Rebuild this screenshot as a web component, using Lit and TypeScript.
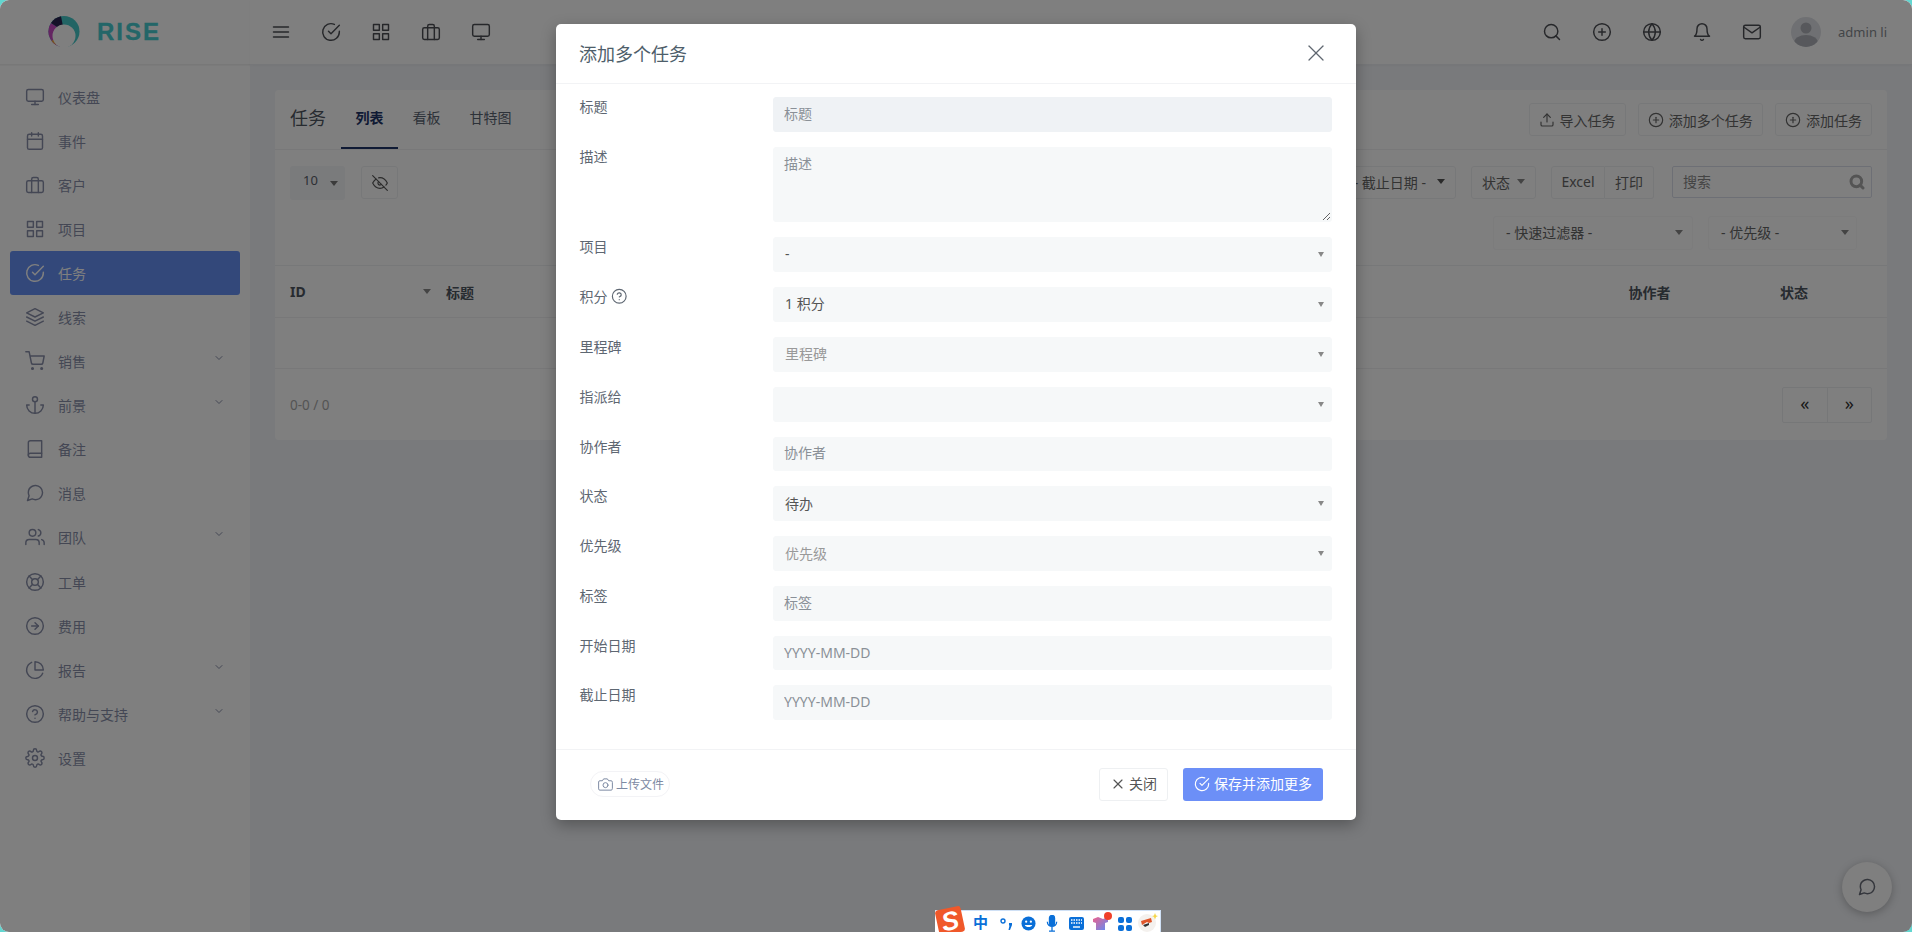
import { LitElement, html, css, svg } from "lit";
import { customElement } from "lit/decorators.js";

const I: Record<string, any> = {
  monitor: svg`<rect x="2" y="3" width="20" height="14" rx="2"/><line x1="8" y1="21" x2="16" y2="21"/><line x1="12" y1="17" x2="12" y2="21"/>`,
  calendar: svg`<rect x="3" y="4" width="18" height="18" rx="2"/><line x1="16" y1="2" x2="16" y2="6"/><line x1="8" y1="2" x2="8" y2="6"/><line x1="3" y1="10" x2="21" y2="10"/>`,
  briefcase: svg`<rect x="2" y="7" width="20" height="14" rx="2"/><path d="M16 21V5a2 2 0 0 0-2-2h-4a2 2 0 0 0-2 2v16"/>`,
  grid: svg`<rect x="3" y="3" width="7" height="7"/><rect x="14" y="3" width="7" height="7"/><rect x="14" y="14" width="7" height="7"/><rect x="3" y="14" width="7" height="7"/>`,
  check: svg`<path d="M22 11.08V12a10 10 0 1 1-5.93-9.14"/><polyline points="22 4 12 14.01 9 11.01"/>`,
  layers: svg`<polygon points="12 2 2 7 12 12 22 7 12 2"/><polyline points="2 17 12 22 22 17"/><polyline points="2 12 12 17 22 12"/>`,
  cart: svg`<circle cx="9" cy="21" r="1"/><circle cx="20" cy="21" r="1"/><path d="M1 1h4l2.68 13.39a2 2 0 0 0 2 1.61h9.72a2 2 0 0 0 2-1.61L23 6H6"/>`,
  anchor: svg`<circle cx="12" cy="5" r="3"/><line x1="12" y1="22" x2="12" y2="8"/><path d="M5 12H2a10 10 0 0 0 20 0h-3"/>`,
  book: svg`<path d="M4 19.5A2.5 2.5 0 0 1 6.5 17H20"/><path d="M6.5 2H20v20H6.5A2.5 2.5 0 0 1 4 19.5v-15A2.5 2.5 0 0 1 6.5 2z"/>`,
  message: svg`<path d="M21 11.5a8.38 8.38 0 0 1-.9 3.8 8.5 8.5 0 0 1-7.6 4.7 8.38 8.38 0 0 1-3.8-.9L3 21l1.9-5.7a8.38 8.38 0 0 1-.9-3.8 8.5 8.5 0 0 1 4.7-7.6 8.38 8.38 0 0 1 3.8-.9h.5a8.48 8.48 0 0 1 8 8v.5z"/>`,
  users: svg`<path d="M17 21v-2a4 4 0 0 0-4-4H5a4 4 0 0 0-4 4v2"/><circle cx="9" cy="7" r="4"/><path d="M23 21v-2a4 4 0 0 0-3-3.87"/><path d="M16 3.13a4 4 0 0 1 0 7.75"/>`,
  buoy: svg`<circle cx="12" cy="12" r="10"/><circle cx="12" cy="12" r="4"/><line x1="4.93" y1="4.93" x2="9.17" y2="9.17"/><line x1="14.83" y1="14.83" x2="19.07" y2="19.07"/><line x1="14.83" y1="9.17" x2="19.07" y2="4.93"/><line x1="4.93" y1="19.07" x2="9.17" y2="14.83"/>`,
  arrow: svg`<circle cx="12" cy="12" r="10"/><polyline points="12 16 16 12 12 8"/><line x1="8" y1="12" x2="16" y2="12"/>`,
  pie: svg`<path d="M21.21 15.89A10 10 0 1 1 8 2.83"/><path d="M22 12A10 10 0 0 0 12 2v10z"/>`,
  help: svg`<circle cx="12" cy="12" r="10"/><path d="M9.09 9a3 3 0 0 1 5.83 1c0 2-3 3-3 3"/><line x1="12" y1="17" x2="12.01" y2="17"/>`,
  settings: svg`<circle cx="12" cy="12" r="3"/><path d="M19.4 15a1.65 1.65 0 0 0 .33 1.82l.06.06a2 2 0 0 1 0 2.83 2 2 0 0 1-2.83 0l-.06-.06a1.65 1.65 0 0 0-1.82-.33 1.65 1.65 0 0 0-1 1.51V21a2 2 0 0 1-2 2 2 2 0 0 1-2-2v-.09A1.65 1.65 0 0 0 9 19.4a1.65 1.65 0 0 0-1.82.33l-.06.06a2 2 0 0 1-2.83 0 2 2 0 0 1 0-2.83l.06-.06a1.65 1.65 0 0 0 .33-1.82 1.65 1.65 0 0 0-1.51-1H3a2 2 0 0 1-2-2 2 2 0 0 1 2-2h.09A1.65 1.65 0 0 0 4.6 9a1.65 1.65 0 0 0-.33-1.82l-.06-.06a2 2 0 0 1 0-2.83 2 2 0 0 1 2.83 0l.06.06a1.65 1.65 0 0 0 1.82.33H9a1.65 1.65 0 0 0 1-1.51V3a2 2 0 0 1 2-2 2 2 0 0 1 2 2v.09a1.65 1.65 0 0 0 1 1.51 1.65 1.65 0 0 0 1.82-.33l.06-.06a2 2 0 0 1 2.83 0 2 2 0 0 1 0 2.83l-.06.06a1.65 1.65 0 0 0-.33 1.82V9a1.65 1.65 0 0 0 1.51 1H21a2 2 0 0 1 2 2 2 2 0 0 1-2 2h-.09a1.65 1.65 0 0 0-1.51 1z"/>`,
  menu: svg`<line x1="3" y1="12" x2="21" y2="12"/><line x1="3" y1="6" x2="21" y2="6"/><line x1="3" y1="18" x2="21" y2="18"/>`,
  search: svg`<circle cx="11" cy="11" r="8"/><line x1="21" y1="21" x2="16.65" y2="16.65"/>`,
  plus: svg`<circle cx="12" cy="12" r="10"/><line x1="12" y1="8" x2="12" y2="16"/><line x1="8" y1="12" x2="16" y2="12"/>`,
  globe: svg`<circle cx="12" cy="12" r="10"/><line x1="2" y1="12" x2="22" y2="12"/><path d="M12 2a15.3 15.3 0 0 1 4 10 15.3 15.3 0 0 1-4 10 15.3 15.3 0 0 1-4-10 15.3 15.3 0 0 1 4-10z"/>`,
  bell: svg`<path d="M18 8A6 6 0 0 0 6 8c0 7-3 9-3 9h18s-3-2-3-9"/><path d="M13.73 21a2 2 0 0 1-3.46 0"/>`,
  mail: svg`<path d="M4 4h16c1.1 0 2 .9 2 2v12c0 1.1-.9 2-2 2H4c-1.1 0-2-.9-2-2V6c0-1.1.9-2 2-2z"/><polyline points="22,6 12,13 2,6"/>`,
  eyeoff: svg`<path d="M17.94 17.94A10.07 10.07 0 0 1 12 20c-7 0-11-8-11-8a18.45 18.45 0 0 1 5.06-5.94M9.9 4.24A9.12 9.12 0 0 1 12 4c7 0 11 8 11 8a18.5 18.5 0 0 1-2.16 3.19m-6.72-1.07a3 3 0 1 1-4.24-4.24"/><line x1="1" y1="1" x2="23" y2="23"/>`,
  upload: svg`<path d="M21 15v4a2 2 0 0 1-2 2H5a2 2 0 0 1-2-2v-4"/><polyline points="17 8 12 3 7 8"/><line x1="12" y1="3" x2="12" y2="15"/>`,
  camera: svg`<path d="M23 19a2 2 0 0 1-2 2H3a2 2 0 0 1-2-2V8a2 2 0 0 1 2-2h4l2-3h6l2 3h4a2 2 0 0 1 2 2z"/><circle cx="12" cy="13" r="4"/>`,
  x: svg`<line x1="18" y1="6" x2="6" y2="18"/><line x1="6" y1="6" x2="18" y2="18"/>`,
  chev: svg`<polyline points="6 9 12 15 18 9"/>`,
};
const icon = (n: string, cls = "") =>
  html`<svg class="ic ${cls}" viewBox="0 0 24 24" fill="none" stroke="currentColor" stroke-linecap="round" stroke-linejoin="round">${I[n]}</svg>`;

const MENU: [string, string, boolean?, boolean?][] = [
  ["monitor", "仪表盘"], ["calendar", "事件"], ["briefcase", "客户"], ["grid", "项目"],
  ["check", "任务", false, true], ["layers", "线索"], ["cart", "销售", true], ["anchor", "前景", true],
  ["book", "备注"], ["message", "消息"], ["users", "团队", true], ["buoy", "工单"],
  ["arrow", "费用"], ["pie", "报告", true], ["help", "帮助与支持", true], ["settings", "设置"],
];

@customElement("app-root")
export class AppRoot extends LitElement {
  static styles = css`
    :host { display: block; width: 1912px; height: 932px; background: #62d6d0; overflow: hidden; position: relative;
      font-family: "Noto Sans", "Noto Sans CJK SC", sans-serif; font-size: 14px; color: #4e5e6a; }
    * { box-sizing: border-box; }
    .ic { width: 20px; height: 20px; stroke-width: 1.75; flex: none; display: block; }
    .frame { position: absolute; inset: 0; border-radius: 9px; overflow: hidden; background: #f3f5f9; display: flex; }
    .side { width: 250px; flex: none; background: #fff; display: flex; flex-direction: column; }
    .logo { height: 65px; display: flex; align-items: center; padding-left: 48px; gap: 17px; border-bottom: 1px solid #f0f0f0; box-shadow: 0 1px 1px rgba(0,0,0,.03); }
    .logo svg { width: 32px; height: 32px; flex: none; }
    .logo b { font: bold 24px "Liberation Sans", sans-serif; letter-spacing: 2px; color: #46ccd0; -webkit-text-stroke: .3px #46ccd0; }
    .nav { padding: 9.5px 10px 0; display: flex; flex-direction: column; }
    .item { height: 44.1px; display: flex; align-items: center; padding-left: 15px; gap: 13px; border-radius: 3px; color: #898fa9; position: relative; }
    .item.on { background: #6690f4; color: #fff; }
    .chev { width: 12px; height: 12px; position: absolute; right: 15px; top: 13px; stroke-width: 2; }
    .main { flex: 1; min-width: 0; display: flex; flex-direction: column; }
    .top { height: 65px; flex: none; background: #fff; display: flex; align-items: center; padding: 0 25px 0 21px; border-bottom: 1px solid #eceff3; box-shadow: 0 1px 3px rgba(0,0,0,.04); color: #4d4f55; }
    .tl, .tr { display: flex; gap: 30px; }
    .tr { margin-left: auto; align-items: center; }
    .user { display: flex; align-items: center; gap: 17px; margin-left: -1px; color: #868a90; font-size: 13px; }
    .avatar { width: 30px; height: 30px; border-radius: 50%; background: #dfe1e6; overflow: hidden; }
    .avatar svg { display: block; width: 30px; height: 30px; }
    .content { padding: 25px 25px 0; flex: 1; }
    .card { background: #fff; border-radius: 4px; height: 350px; display: flex; flex-direction: column; }
    .chead { height: 60px; flex: none; display: flex; align-items: stretch; padding-left: 15px; border-bottom: 1px solid #f0f1f3; }
    .chead h4 { margin: 0; font-weight: 400; font-size: 18px; line-height: 56px; width: 51px; color: #4e5660; }
    .tab { padding: 0 14.5px; line-height: 55px; color: #5a6472; position: relative; width: 57px; white-space: nowrap; }
    .tab.w3 { width: 71px; }
    .tab.on { color: #1f3568; font-weight: 700; border-bottom: 2px solid #1f3568; }
    .hbtns { margin-left: auto; display: flex; gap: 12px; padding: 13px 15px 0 0; }
    .btn { height: 33px; border: 1px solid #eff0f3; border-radius: 3px; display: flex; align-items: center; justify-content: center; gap: 5px; background: #fff; color: #666; white-space: nowrap; padding-bottom: 2px; }
    .hbtn { width: 97px; padding-bottom: 0; }
    .hbtn.w { width: 125.500px; }
    .ic.s { width: 16px; height: 16px; stroke-width: 1.75; }
    .bar { height: 116px; flex: none; padding: 16px 15px 0; border-bottom: 1px solid #eff0f2; display: flex; flex-direction: column; gap: 16px; position: relative; }
    .row1, .row2 { display: flex; align-items: flex-start; }
    .sel10 { width: 55px; height: 34px; background: #f5f6f8; border-radius: 3px; padding-left: 13px; line-height: 29px; font-size: 13px; color: #5a6068; position: relative; }
    .eye { width: 37px; margin-left: 16px; color: #555; padding-bottom: 0; }
    .tri { width: 0; height: 0; border-style: solid; border-width: 5px 4px 0; border-color: #555 transparent transparent; flex: none; }
    .tri.l { border-color: #888 transparent transparent; }
    .sel10 .tri { position: absolute; right: 7px; top: 15px; border-color: #777 transparent transparent; }
    .rgt { margin-left: auto; display: flex; }
    .b-date { width: 126px; margin-right: 15px; justify-content: flex-end; padding-right: 10px; gap: 11px; }
    .b-st { width: 65px; margin-right: 15px; gap: 7px; }
    .grp { display: flex; margin-right: 18px; }
    .grp .btn:first-child { width: 54px; border-radius: 3px 0 0 3px; }
    .grp .btn:last-child { width: 49px; border-left: 0; border-radius: 0 3px 3px 0; }
    .srch { width: 200px; height: 32px; border: 1px solid #dbdfea; border-radius: 2px; display: flex; align-items: center; justify-content: space-between; padding: 0 6px 2px 10px; color: #888; }
    .srch svg { width: 16px; height: 16px; color: #a9a9a9; stroke-width: 4.5; margin-top: 2px; }
    .row2 { justify-content: flex-end; gap: 15px; padding-right: 15px; }
    .fsel { height: 34px; border: 1px solid #f8f8f9; border-radius: 3px; display: flex; align-items: center; justify-content: space-between; padding: 0 7px 2px 12px; color: #666; }
    .fq { width: 200px; padding-right: 9px; }
    .fp { width: 149px; }
    .thead { height: 52px; flex: none; display: grid; grid-template-columns: 156px 1fr 151.5px 107px; align-items: center; padding-left: 15px; border-bottom: 1px solid #f0f1f3; font-weight: 700; color: #4e5660; }
    .idc { display: flex; justify-content: space-between; padding-right: 15px; align-items: center; }
    .trow { height: 51px; flex: none; border-bottom: 1px solid #f0f1f3; }
    .foot { flex: 1; display: flex; align-items: center; justify-content: space-between; padding: 0 15px; color: #a8a8a8; font-size: 13.500px; }
    .pg { display: flex; height: 36px; width: 90px; border: 1px solid #eceef1; border-radius: 2px; }
    .pg span { flex: 1; display: flex; align-items: center; justify-content: center; color: #333; font-size: 18px; font-weight: 400; padding-bottom: 3px; }
    .pg span + span { border-left: 1px solid #eceef1; }
    .overlay { position: absolute; inset: 0; background: rgba(0,0,0,.5); display: flex; justify-content: center; padding-top: 24px; }
    .modal { width: 800px; height: 796px; background: #fff; border-radius: 5px; box-shadow: 0 5px 15px rgba(0,0,0,.3); display: flex; flex-direction: column; }
    .mh { height: 60px; flex: none; display: flex; align-items: center; justify-content: space-between; padding: 0 26px 2px 23px; border-bottom: 1px solid #f2f3f5; }
    .mh h5 { margin: 0; font-weight: 400; font-size: 18px; color: #4e5e6a; }
    .mh .ic { width: 28px; height: 28px; stroke-width: 1.1; color: #5f6770; }
    .mb { flex: 1; padding: 13px 24.5px 0 23.5px; display: flex; flex-direction: column; gap: 15px; }
    .f { display: flex; }
    .lb { width: 193.5px; flex: none; line-height: 20px; color: #5e6772; display: flex; align-items: center; height: 20px; gap: 3px; }
    .lb svg { width: 16.500px; height: 16.500px; stroke-width: 1.7; }
    .in, .ta, .se { flex: 1; min-width: 0; background: #f6f8f9; border: 1px solid #f6f8f9; border-radius: 3px; font: inherit; color: #555; outline: none; }
    .in { height: 34.6px; padding: 0 10px 2px; }
    .in.fo { background: #eff2f5; border-color: #eff2f5; }
    .in::placeholder, .ta::placeholder { color: #8a9097; opacity: 1; }
    .ta { height: 75px; padding: 5px 10px; display: block; resize: vertical; }
    .se { height: 35px; display: flex; align-items: center; justify-content: space-between; padding: 0 7px 2px 11px; color: #555; }
    .se.ph { color: #999; }
    .se .tri { border-width: 5px 3px 0; border-color: #888 transparent transparent; margin-top: 2px; }
    .mf { height: 71px; flex: none; border-top: 1px solid #f2f3f5; display: flex; align-items: center; padding: 0 33px 2px 34px; gap: 15px; }
    .up { height: 26px; width: 80px; border: 1px solid #f3f3f6; border-radius: 13px; display: flex; align-items: center; gap: 3px; padding-left: 7px; color: #7d8aa3; font-size: 12px; margin-right: auto; }
    .up svg { width: 15px; height: 15px; stroke-width: 1.6; }
    .mbtn { height: 33px; border-radius: 3px; display: flex; align-items: center; justify-content: center; gap: 4px; white-space: nowrap; padding-bottom: 2px; }
    .mbtn svg { margin-top: 2px; }
    .cl { width: 69px; border: 1px solid #eef0f2; color: #555; gap: 3px; }
    .sv { width: 140px; background: #6c8ff7; color: #fff; }
    .cl svg { width: 16px; height: 16px; }
    .chat { position: absolute; right: 20px; bottom: 20px; width: 50px; height: 50px; border-radius: 50%; background: #7f7f7f; box-shadow: 0 2px 8px rgba(0,0,0,.25); display: flex; align-items: center; justify-content: center; color: #34363c; }
    .ime { position: absolute; left: 935px; bottom: 0; width: 226px; height: 22px; background: #fff; border-top: 1px solid #cfe0f5; border-right: 1px solid #cfe0f5; color: #0a6fd8; }
    .ime > * { position: absolute; }
    .sg { left: 2px; top: -3px; width: 26px; height: 26px; background: #f0582a; border-radius: 3px; transform: rotate(-12deg); color: #fff; font: italic bold 26px/26px "Liberation Sans", sans-serif; text-align: center; }
    .zh { left: 38px; top: 0; font: bold 15px/21px "Noto Sans CJK SC", sans-serif; }
    .ime svg { display: block; }
  `;

  private form() {
    const se = (t: string, ph = false) => html`<div class="se ${ph ? "ph" : ""}"><span>${t}</span><i class="tri"></i></div>`;
    const inp = (p: string, fo = false) => html`<input class="in ${fo ? "fo" : ""}" placeholder=${p} />`;
    return html`
      <div class="f"><div class="lb">标题</div>${inp("标题", true)}</div>
      <div class="f"><div class="lb">描述</div><textarea class="ta" placeholder="描述"></textarea></div>
      <div class="f"><div class="lb">项目</div>${se("-")}</div>
      <div class="f"><div class="lb">积分 ${icon("help")}</div>${se("1 积分")}</div>
      <div class="f"><div class="lb">里程碑</div>${se("里程碑", true)}</div>
      <div class="f"><div class="lb">指派给</div>${se("")}</div>
      <div class="f"><div class="lb">协作者</div>${inp("协作者")}</div>
      <div class="f"><div class="lb">状态</div>${se("待办")}</div>
      <div class="f"><div class="lb">优先级</div>${se("优先级", true)}</div>
      <div class="f"><div class="lb">标签</div>${inp("标签")}</div>
      <div class="f"><div class="lb">开始日期</div>${inp("YYYY-MM-DD")}</div>
      <div class="f"><div class="lb">截止日期</div>${inp("YYYY-MM-DD")}</div>`;
  }

  render() {
    return html`
      <div class="frame">
        <aside class="side">
          <div class="logo">
            <svg viewBox="0 0 32 32">
              <circle cx="16" cy="15.500" r="15.500" fill="#45c8c8"/>
              <path d="M16 15.500L16 31A15.500 15.500 0 0 1 3 7z" fill="#c84ac4"/>
              <path d="M16 15.500L9 29.300A15.500 15.500 0 0 1 3.500 25z" fill="#eda93c"/>
              <path d="M16 15.500L3 7A15.500 15.500 0 0 1 13 .3z" fill="#2a2350"/>
              <circle cx="16" cy="20" r="11.500" fill="#fff"/>
            </svg>
            <b>RISE</b>
          </div>
          <nav class="nav">
            ${MENU.map(([ic, t, ch, on]) => html`<div class="item ${on ? "on" : ""}">${icon(ic)}<span>${t}</span>${ch ? icon("chev", "chev") : ""}</div>`)}
          </nav>
        </aside>
        <div class="main">
          <header class="top">
            <div class="tl">${["menu", "check", "grid", "briefcase", "monitor"].map((n) => icon(n))}</div>
            <div class="tr">
              ${["search", "plus", "globe", "bell", "mail"].map((n) => icon(n))}
              <div class="user">
                <div class="avatar"><svg viewBox="0 0 30 30"><circle cx="15" cy="11" r="5.500" fill="#aeb1b8"/><ellipse cx="15" cy="26" rx="12" ry="8" fill="#aeb1b8"/></svg></div>
                <span>admin li</span>
              </div>
            </div>
          </header>
          <div class="content">
            <section class="card">
              <div class="chead">
                <h4>任务</h4>
                <div class="tab on">列表</div><div class="tab">看板</div><div class="tab w3">甘特图</div>
                <div class="hbtns">
                  <div class="btn hbtn">${icon("upload", "s")}<span>导入任务</span></div>
                  <div class="btn hbtn w">${icon("plus", "s")}<span>添加多个任务</span></div>
                  <div class="btn hbtn">${icon("plus", "s")}<span>添加任务</span></div>
                </div>
              </div>
              <div class="bar">
                <div class="row1">
                  <div class="sel10">10<i class="tri"></i></div>
                  <div class="btn eye">${icon("eyeoff", "s")}</div>
                  <div class="rgt">
                    <div class="btn b-date"><span>- 截止日期 -</span><i class="tri"></i></div>
                    <div class="btn b-st"><span>状态</span><i class="tri l"></i></div>
                    <div class="grp"><div class="btn">Excel</div><div class="btn">打印</div></div>
                    <div class="srch"><span>搜索</span>${icon("search")}</div>
                  </div>
                </div>
                <div class="row2">
                  <div class="fsel fq"><span>- 快速过滤器 -</span><i class="tri l"></i></div>
                  <div class="fsel fp"><span>- 优先级 -</span><i class="tri l"></i></div>
                </div>
              </div>
              <div class="thead">
                <div class="idc"><span>ID</span><i class="tri l"></i></div><div>标题</div><div>协作者</div><div>状态</div>
              </div>
              <div class="trow"></div>
              <div class="foot"><span>0-0 / 0</span><div class="pg"><span>«</span><span>»</span></div></div>
            </section>
          </div>
        </div>
        <div class="overlay">
          <div class="modal">
            <div class="mh"><h5>添加多个任务</h5>${icon("x")}</div>
            <div class="mb">${this.form()}</div>
            <div class="mf">
              <div class="up">${icon("camera")}<span>上传文件</span></div>
              <div class="mbtn cl">${icon("x")}<span>关闭</span></div>
              <div class="mbtn sv">${icon("check", "s")}<span>保存并添加更多</span></div>
            </div>
          </div>
        </div>
        <div class="chat">${icon("message")}</div>
      </div>
      <div class="ime">
        <div class="sg">S</div>
        <div class="zh">中</div>
        <svg style="left:65px;top:6px" width="14" height="14" viewBox="0 0 14 14" fill="currentColor"><circle cx="3" cy="4" r="2" fill="none" stroke="currentColor" stroke-width="1.400"/><path d="M9 6h3v2l-2 5H8.500l1-4.500H9z"/></svg>
        <svg style="left:86px;top:5px" width="15" height="15" viewBox="0 0 16 16"><circle cx="8" cy="8" r="7.500" fill="currentColor"/><circle cx="5.500" cy="6" r="1.200" fill="#fff"/><circle cx="10.500" cy="6" r="1.200" fill="#fff"/><path d="M4 9.500c1 3 7 3 8 0z" fill="#fff"/></svg>
        <svg style="left:111px;top:4px" width="12" height="17" viewBox="0 0 14 20" fill="none" stroke="currentColor" stroke-width="1.500"><rect x="4" y="0.500" width="6" height="12" rx="3" fill="currentColor"/><path d="M1.500 8c0 7 11 7 11 0M7 14v5M3.500 19h7"/></svg>
        <svg style="left:134px;top:6px" width="15" height="13" viewBox="0 0 15 13"><rect width="15" height="13" rx="2" fill="currentColor"/><path d="M2 3h11M2 6h11" stroke="#fff" stroke-width="1.400" stroke-dasharray="1.500 1"/><path d="M4 10h7" stroke="#fff" stroke-width="1.400"/></svg>
        <svg style="left:158px;top:0" width="20" height="20" viewBox="0 0 20 20"><defs><linearGradient id="sh" x1="0" y1="0" x2="1" y2="1"><stop offset="0" stop-color="#f0608a"/><stop offset="1" stop-color="#5f8cf5"/></linearGradient></defs><path d="M0 8l5-2 5 2 5-2v5l-3 1v7H3v-7l-3-1z" fill="url(#sh)"/><circle cx="15" cy="5" r="4" fill="#f0402a"/></svg>
        <svg style="left:183px;top:6px" width="14" height="14" viewBox="0 0 14 14" fill="currentColor"><rect width="6" height="6" rx="2"/><rect x="8" width="6" height="6" rx="2"/><rect y="8" width="6" height="6" rx="2"/><rect x="8" y="8" width="6" height="6" rx="2"/></svg>
        <svg style="left:203px;top:2px" width="20" height="20" viewBox="0 0 20 20"><circle cx="9" cy="10" r="9" fill="#f4f1ee"/><path d="M3 8l10-3 1 4-3 1-2-1-5 3z" fill="#e0562a"/><path d="M5 12l6-2v2l-4 2z" fill="#333"/><path d="M17 0l1 2.500 2 .5-2 1-1 2.500-1-2.500-2-1 2-.5z" fill="#f5d64a"/></svg>
      </div>
    `;
  }
}
